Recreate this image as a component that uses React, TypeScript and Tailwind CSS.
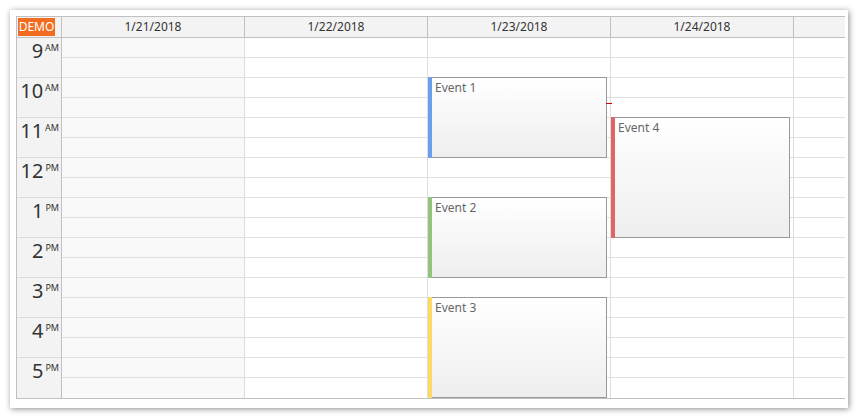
import React from "react";

const days = ["1/21/2018", "1/22/2018", "1/23/2018", "1/24/2018"];
const hours: { h: string; s: string }[] = [
  { h: "9", s: "AM" },
  { h: "10", s: "AM" },
  { h: "11", s: "AM" },
  { h: "12", s: "PM" },
  { h: "1", s: "PM" },
  { h: "2", s: "PM" },
  { h: "3", s: "PM" },
  { h: "4", s: "PM" },
  { h: "5", s: "PM" },
];

interface CalEvent {
  text: string;
  day: number;
  top: number;
  height: number;
  bar: string;
}

// top/height in px relative to the body (each hour = 40px)
const events: CalEvent[] = [
  { text: "Event 1", day: 2, top: 39, height: 81, bar: "bg-[#6d9eeb]" },
  { text: "Event 2", day: 2, top: 159, height: 81, bar: "bg-[#93c47d]" },
  { text: "Event 3", day: 2, top: 259, height: 101, bar: "bg-[#ffd966]" },
  { text: "Event 4", day: 3, top: 79, height: 121, bar: "bg-[#e06666]" },
];

function Cells() {
  return (
    <>
      {Array.from({ length: 18 }).map((_, i) => (
        <div
          key={i}
          className={i === 17 ? "h-[20px]" : "h-[20px] border-b border-[#e0e0e0]"}
        />
      ))}
    </>
  );
}

function EventBox({ e }: { e: CalEvent }) {
  return (
    <div
      className="absolute left-0 w-[179px] flex border border-l-0 border-[#999] bg-gradient-to-b from-white to-[#eeeeee] z-10"
      style={{ top: e.top, height: e.height }}
    >
      <div className={`w-[4px] -my-px shrink-0 ${e.bar}`} />
      <div className="pl-[3px] pt-[2px] text-[12px] leading-[16px] text-[#666]">{e.text}</div>
    </div>
  );
}

export default function App() {
  return (
    <div
      className="w-[860px] h-[420px] bg-white overflow-hidden pt-[10px] pl-[10px]"
      style={{ fontFamily: '"Noto Sans", "Open Sans", sans-serif' }}
    >
      <div className="w-[838px] h-[398px] bg-white shadow-[1px_1px_6px_rgba(0,0,0,0.45)] pt-[6px] pl-[6px]">
        <div className="w-[829px] border-t border-l border-b border-[#c0c0c0]">
          {/* header */}
          <div className="flex h-[21px] bg-[#f3f3f3] border-b border-[#c0c0c0] text-[12px] text-[#333]">
            <div className="w-[45px] shrink-0 border-r border-[#c0c0c0] pl-px pt-px">
              <div className="w-[37px] h-[18px] bg-[#f26c1f] text-white text-[12px] leading-[18px] text-center">
                DEMO
              </div>
            </div>
            {days.map((d) => (
              <div
                key={d}
                className="w-[183px] shrink-0 border-r border-[#c0c0c0] flex items-center justify-center"
              >
                {d}
              </div>
            ))}
            <div className="flex-1" />
          </div>
          {/* body */}
          <div className="flex">
            <div className="w-[45px] shrink-0 border-r border-[#c0c0c0] bg-[#f3f3f3]">
              {hours.map((h, i) => (
                <div
                  key={i}
                  className={`h-[40px] flex justify-end pr-[2px] pt-[3px] text-[#333] ${
                    i < hours.length - 1 ? "border-b border-[#dadada]" : ""
                  }`}
                >
                  <span className="text-[20px] leading-none">{h.h}</span>
                  <span className="text-[9px] leading-none pl-[2px] pt-[2px]">{h.s}</span>
                </div>
              ))}
            </div>
            {days.map((d, di) => (
              <div
                key={d}
                className={`relative w-[183px] shrink-0 border-r border-[#dddddd] ${
                  di === 0 ? "bg-[#f9f9f9]" : "bg-white"
                }`}
              >
                <Cells />
                {events
                  .filter((e) => e.day === di)
                  .map((e) => (
                    <EventBox key={e.text} e={e} />
                  ))}
                {di === 2 && (
                  <div className="absolute left-[178px] top-[65px] w-[6px] h-px bg-[#cc0000] z-20" />
                )}
              </div>
            ))}
            <div className="flex-1 bg-white">
              <Cells />
            </div>
          </div>
        </div>
      </div>
    </div>
  );
}
